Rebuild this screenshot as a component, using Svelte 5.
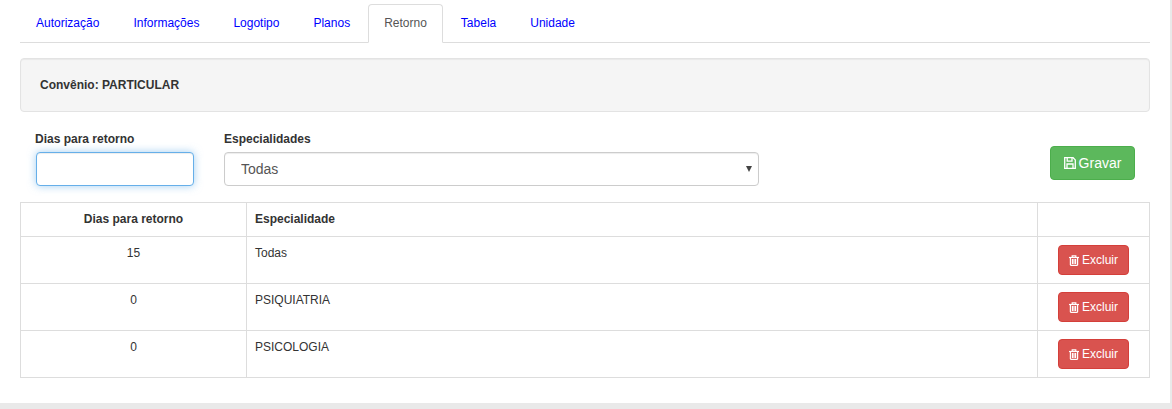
<script>
  const tabs = ['Autorização', 'Informações', 'Logotipo', 'Planos', 'Retorno', 'Tabela', 'Unidade'];
  const active = 'Retorno';

  let rows = [
    { dias: 15, nome: 'Todas' },
    { dias: 0, nome: 'PSIQUIATRIA' },
    { dias: 0, nome: 'PSICOLOGIA' }
  ];
</script>

<div class="page">
  <div class="panel">
    <ul class="tabs">
      {#each tabs as tab}
        <li class="tab" class:active={tab === active}><a href="#top">{tab}</a></li>
      {/each}
    </ul>

    <div class="well">Convênio: PARTICULAR</div>

    <form class="form-row">
      <div class="field">
        <label for="dias">Dias para retorno</label>
        <input id="dias" class="form-input focused" type="text" />
      </div>
      <div class="field grow">
        <label for="esp">Especialidades</label>
        <div class="select-wrap">
          <select id="esp" class="form-select">
            <option>Todas</option>
          </select>
        </div>
      </div>
      <button type="button" class="btn gravar">
        <svg class="icon" width="12" height="12" viewBox="0 0 12 12" fill="none" stroke="currentColor" stroke-width="1.3">
          <path d="M.7.7h8.4l2.2 2.2v8.4H.7z" />
          <path d="M3.2 1v3.2h4.8V1" />
          <path d="M3 11V7h6v4" />
        </svg>
        Gravar
      </button>
    </form>

    <table class="grid">
      <thead>
        <tr>
          <th class="col-dias">Dias para retorno</th>
          <th class="col-esp">Especialidade</th>
          <th class="col-acao"></th>
        </tr>
      </thead>
      <tbody>
        {#each rows as row}
          <tr>
            <td class="col-dias">{row.dias}</td>
            <td class="col-esp">{row.nome}</td>
            <td class="col-acao">
              <button type="button" class="btn excluir">
                <svg class="icon" width="10" height="11" viewBox="0 0 10 11" fill="none" stroke="currentColor" stroke-width="1.2">
                  <path d="M0 2.5h10" />
                  <path d="M3.2 2.5V.8h3.6v1.7" />
                  <path d="M1.4 2.5v7.2l.6.7h6l.6-.7V2.5" />
                  <path d="M3.4 4v5M5 4v5M6.6 4v5" />
                </svg>
                Excluir
              </button>
            </td>
          </tr>
        {/each}
      </tbody>
    </table>
  </div>
</div>

<style>
  :global(body) {
    margin: 0;
    background: #e9e9e9;
  }

  .page {
    width: 1172px;
    height: 409px;
    overflow: hidden;
    font-family: "Liberation Sans", Arial, sans-serif;
    font-size: 12px;
    line-height: 17px;
    color: #333;
  }

  .panel {
    box-sizing: border-box;
    width: 1170px;
    height: 403px;
    padding: 4px 20px 0;
    background: #fff;
  }

  .tabs {
    display: flex;
    margin: 0;
    padding: 0;
    list-style: none;
    border-bottom: 1px solid #ddd;
  }

  .tab {
    margin-right: 2px;
    margin-bottom: -1px;
  }

  .tab a {
    display: block;
    padding: 10px 15px;
    border: 1px solid transparent;
    border-radius: 4px 4px 0 0;
    color: #0000ff;
    text-decoration: none;
  }

  .tab.active a {
    color: #555;
    background: #fff;
    border-color: #ddd #ddd #fff;
  }

  .well {
    margin-top: 15px;
    padding: 18px 19px 17px;
    background: #f5f5f5;
    border: 1px solid #e3e3e3;
    border-radius: 4px;
    box-shadow: inset 0 1px 1px rgba(0, 0, 0, 0.05);
    font-weight: bold;
  }

  .form-row {
    display: flex;
    align-items: flex-end;
    margin-top: 19px;
    padding: 0 15px;
  }

  .field {
    display: flex;
    flex-direction: column;
    margin-right: 30px;
  }

  .field.grow {
    margin-right: auto;
  }

  .field label {
    margin-bottom: 4px;
    font-weight: bold;
  }

  .form-input {
    box-sizing: border-box;
    width: 158px;
    height: 34px;
    margin-left: 1px;
    padding: 6px 12px;
    font-size: 14px;
    color: #555;
    background: #fff;
    border: 1px solid #ccc;
    border-radius: 4px;
    outline: none;
  }

  .form-input.focused {
    border-color: #66afe9;
    box-shadow: inset 0 1px 1px rgba(0, 0, 0, 0.075), 0 0 8px rgba(102, 175, 233, 0.6);
  }

  .select-wrap {
    position: relative;
    width: 535px;
  }

  .select-wrap::after {
    content: "";
    position: absolute;
    top: 14px;
    right: 7px;
    border-top: 6px solid #444;
    border-left: 3px solid transparent;
    border-right: 3px solid transparent;
    pointer-events: none;
  }

  .form-select {
    display: block;
    box-sizing: border-box;
    width: 100%;
    height: 34px;
    padding: 6px 16px;
    font-family: inherit;
    font-size: 14px;
    color: #555;
    background: #fff;
    border: 1px solid #ccc;
    border-radius: 4px;
    box-shadow: inset 0 1px 1px rgba(0, 0, 0, 0.075);
    appearance: none;
  }

  .btn {
    display: inline-flex;
    align-items: center;
    justify-content: center;
    box-sizing: border-box;
    font-family: inherit;
    color: #fff;
    border: 1px solid transparent;
    border-radius: 4px;
    cursor: pointer;
  }

  .icon {
    flex: none;
    margin-right: 3px;
  }

  .gravar {
    width: 85px;
    height: 34px;
    margin-bottom: 6px;
    padding: 6px 12px;
    font-size: 14px;
    background: #5cb85c;
    border-color: #4cae4c;
  }

  .excluir {
    width: 71px;
    height: 30px;
    padding: 5px 10px;
    font-size: 12px;
    background: #d9534f;
    border-color: #d43f3a;
  }

  .grid {
    box-sizing: border-box;
    width: 1130px;
    margin-top: 16px;
    border-collapse: collapse;
    table-layout: fixed;
    border: 1px solid #ddd;
  }

  .grid th,
  .grid td {
    padding: 8px;
    border: 1px solid #ddd;
    text-align: left;
    vertical-align: top;
  }

  .grid .col-dias {
    width: 226px;
    box-sizing: border-box;
    text-align: center;
  }

  .grid .col-acao {
    width: 112px;
    box-sizing: border-box;
    text-align: center;
  }
</style>
